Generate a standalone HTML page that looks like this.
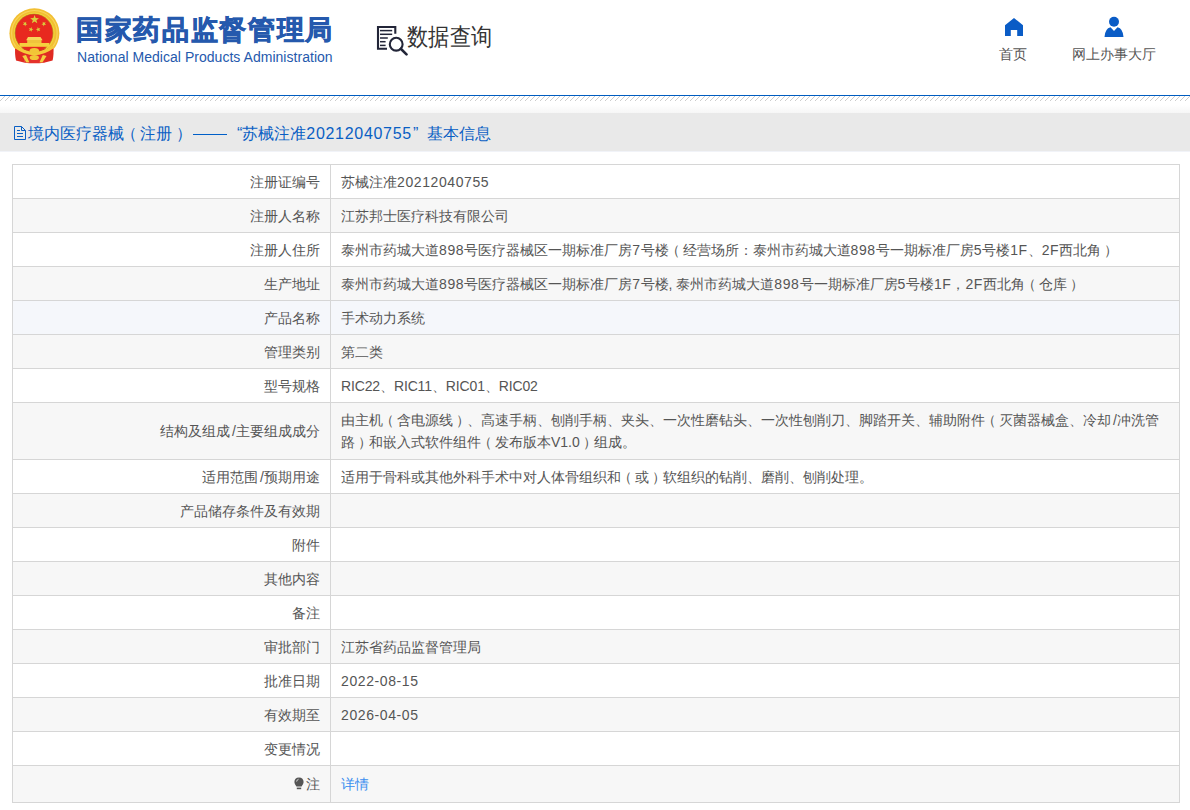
<!DOCTYPE html>
<html><head><meta charset="utf-8">
<style>
*{margin:0;padding:0;box-sizing:border-box}
html,body{width:1190px;height:810px;overflow:hidden;background:#fff;font-family:"Liberation Sans",sans-serif}
.hdr{position:absolute;left:0;top:0;width:1190px;height:95px;background:#fff}
.emb{position:absolute;left:0;top:0;width:70px;height:70px}
.t1{position:absolute;left:76px;top:13px;font-size:27px;font-weight:bold;color:#2559ad;-webkit-text-stroke:0.7px #2559ad;white-space:nowrap;line-height:34px;letter-spacing:1.65px}
.t2{position:absolute;left:77px;top:48px;font-size:14px;color:#2559ad;white-space:nowrap;line-height:18px;letter-spacing:0.03px}
.dq{position:absolute;left:376px;top:25px;width:33px;height:31px}
.dqt{position:absolute;left:407px;top:21px;font-size:22px;color:#333;white-space:nowrap;line-height:30px;transform:scale(0.97,1.1);transform-origin:0 0}
.nav{position:absolute;top:0;font-size:14px;color:#555;white-space:nowrap;line-height:18px}
.line{position:absolute;left:0;top:95px;width:1190px;height:1px;background:#005cc0}
.hatch{position:absolute;left:0;top:96px;width:1190px;height:5px;display:block}
.grad{position:absolute;left:0;top:105px;width:1190px;height:8px;background:linear-gradient(#fff,#f6f6f6)}
.band{position:absolute;left:0;top:113px;width:1190px;height:38px;background:#e9e9e9}
.band2{position:absolute;left:0;top:151px;width:1190px;height:1px;background:#f1f3f8}
.sh{position:relative}
.dash{display:inline-block;width:34px;height:1px;background:#005fc8;margin-left:5px;vertical-align:4px}
.q1{margin-left:10px}
.dg{letter-spacing:0.7px}
.q2{margin-left:1px}
.jb{margin-left:9px}
.ttl{padding-left:14px;position:absolute;left:14px;top:121px;font-size:16px;color:#0a5fc4;white-space:nowrap;line-height:26px}
table{position:absolute;left:12px;top:164px;width:1168px;border-collapse:collapse;font-size:14px;color:#555}
td{border:1px solid #d6d6d6;height:34px;line-height:22px;padding:0 0 0 10px;vertical-align:middle}
td.l{width:318px;text-align:right;padding:0 10px 0 0}
tr.g td{background:#f7f7f7}
tr.b td{background:#f5f7fb}
.n{letter-spacing:0.6px}
.r{letter-spacing:-0.15px}
.sl{margin-left:2px}
.lp{position:relative;left:-3px}
.rp{position:relative;left:3px}
a{color:#3a8ef0;text-decoration:none}
</style></head><body>
<div class="hdr">
<svg class="emb" width="70" height="70" viewBox="0 0 70 70">
  <path d="M16 44 H53 V56 Q34.4 62 16 56 Z" fill="#e02a22"/>
<path d="M15.2 44 L24.5 47 L24.8 62.7 L16 60.5 Q14.6 55 15.2 44 Z" fill="#e02a22"/>
  <path d="M53.4 44 L44.2 47 L43.9 62.7 L52.6 60.5 Q54 55 53.4 44 Z" fill="#e02a22"/>
  <defs><clipPath id="ec"><rect x="0" y="0" width="70" height="48.5"/></clipPath></defs>
  <g clip-path="url(#ec)"><circle cx="34.4" cy="33.3" r="25" fill="#f2bf32"/><circle cx="34.4" cy="33.3" r="22.8" fill="none" stroke="#f8d45a" stroke-width="1.2"/></g>
  <circle cx="34.2" cy="33.1" r="19.9" fill="none" stroke="#efdc3c" stroke-width="1"/>
  <circle cx="34" cy="33" r="18.9" fill="#e8291f" stroke="#a8741a" stroke-width="0.5"/>
  <g fill="#d9cf3e">
  <polygon points="34.60,15.00 35.72,18.06 38.97,18.18 36.41,20.19 37.30,23.32 34.60,21.50 31.90,23.32 32.79,20.19 30.23,18.18 33.48,18.06"/>
  <polygon points="26.25,21.73 25.96,23.47 27.45,24.42 25.70,24.68 25.26,26.39 24.48,24.81 22.72,24.92 23.97,23.68 23.33,22.04 24.89,22.86"/>
  <polygon points="42.65,21.73 44.01,22.86 45.57,22.04 44.93,23.68 46.18,24.92 44.42,24.81 43.64,26.39 43.20,24.68 41.45,24.42 42.94,23.47"/>
  <polygon points="31.55,26.99 31.72,28.74 33.40,29.27 31.78,29.97 31.80,31.73 30.63,30.41 28.96,30.97 29.85,29.45 28.80,28.04 30.52,28.42"/>
  <polygon points="37.65,26.99 38.68,28.42 40.40,28.04 39.35,29.45 40.24,30.97 38.57,30.41 37.40,31.73 37.42,29.97 35.80,29.27 37.48,28.74"/>
  </g>
  <path d="M26.2 40.2 L28 37 H40.5 L42.6 40.2 Z" fill="#f7d65a"/>
  <rect x="27.2" y="40" width="14.3" height="3.2" fill="#f0c43c"/>
  <rect x="19.5" y="43" width="29.8" height="3.8" fill="#f5cf3e"/>
    <path d="M24 54 Q34.4 58.5 44.5 54 L44.2 62.7 Q34.4 64 24.6 62.7 Z" fill="#e5322b"/>
  <path d="M15.5 46.8 Q34.4 60.5 53.2 46.8" fill="none" stroke="#f4c93a" stroke-width="3"/>
  <ellipse cx="34.3" cy="51" rx="4.8" ry="3" fill="#f2c537"/>
  <polygon points="22.3,56 26,55 29.3,62.3 26.4,62.6" fill="#f3d040"/>
  <polygon points="46.5,56 42.8,55 39.5,62.3 42.4,62.6" fill="#f3d040"/>
  <ellipse cx="34.3" cy="57.5" rx="4.6" ry="2.6" fill="#f2c537"/>
</svg>
<div class="t1">国家药品监督管理局</div>
<div class="t2">National Medical Products Administration</div>
<svg class="dq" viewBox="0 0 33 31">
  <path d="M11 23.8 H2 V2 H19.3 V8.8" fill="none" stroke="#222538" stroke-width="2.1"/>
  <g stroke="#222538" stroke-width="1.5">
  <line x1="4" y1="5.6" x2="16.2" y2="5.6"/>
  <line x1="4" y1="9.3" x2="16.2" y2="9.3"/>
  <line x1="4" y1="13" x2="11.8" y2="13"/>
  <line x1="4" y1="16.7" x2="9.6" y2="16.7"/>
  <line x1="4" y1="20.4" x2="9.6" y2="20.4"/>
  </g>
  <circle cx="20.2" cy="19.2" r="6.4" fill="none" stroke="#222538" stroke-width="2.1"/>
  <line x1="24.8" y1="23.8" x2="30.5" y2="29.4" stroke="#222538" stroke-width="2.6" stroke-linecap="round"/>
</svg>
<div class="dqt">数据查询</div>
<svg style="position:absolute;left:1004.5px;top:18px" width="18" height="18" viewBox="0 0 18 18">
  <path d="M9 0 L18 7.2 V18 H12.2 V12 H5.8 V18 H0 V7.2 Z" fill="#0a5cc6"/>
</svg>
<div class="nav" style="left:999px;top:45px">首页</div>
<svg style="position:absolute;left:1104px;top:16px" width="20" height="21" viewBox="0 0 20 21">
  <circle cx="10" cy="5.8" r="5" fill="#0a5cc6"/>
  <path d="M0.5 21 Q1 12.5 6.5 11.2 L10 15 L13.5 11.2 Q19 12.5 19.5 21 Z" fill="#0a5cc6"/>
</svg>
<div class="nav" style="left:1072px;top:45px">网上办事大厅</div>
</div>
<div class="line"></div>
<svg class="hatch" width="1190" height="5"><defs><pattern id="hp" width="5" height="5" patternUnits="userSpaceOnUse"><g fill="#cccccc"><rect x="4" y="0" width="1" height="1"/><rect x="3" y="1" width="1" height="1"/><rect x="2" y="2" width="1" height="1"/><rect x="1" y="3" width="1" height="1"/><rect x="0" y="4" width="1" height="1"/></g></pattern></defs><rect width="1190" height="5" fill="url(#hp)"/></svg>
<div class="grad"></div>
<div class="band"></div>
<div class="band2"></div>
<div class="ttl"><svg width="12" height="14" viewBox="0 0 12 14" style="position:absolute;left:0;top:5px"><path d="M0.5 0.5 H7.5 L11.5 4.5 V13.5 H0.5 Z M7.5 0.5 V4.5 H11.5" fill="none" stroke="#0a5fc4" stroke-width="1"/><path d="M3 4.5 H6 M3 7.5 H9 M3 10.5 H9" stroke="#0a5fc4" stroke-width="1"/></svg>境内医疗器械<span class="sh" style="left:-3.5px">（</span>注册<span class="sh" style="left:4px">）</span><span class="dash"></span><span class="q1">“</span>苏械注准<span class="dg">20212040755</span><span class="q2">”</span><span class="jb">基本信息</span></div>
<table>
<tr><td class="l">注册证编号</td><td>苏械注准<span class="n">20212040755</span></td></tr>
<tr class="g"><td class="l">注册人名称</td><td>江苏邦士医疗科技有限公司</td></tr>
<tr><td class="l">注册人住所</td><td>泰州市药城大道<span class="n">898</span>号医疗器械区一期标准厂房<span class="n">7</span>号楼<span class="lp">（</span>经营场所：泰州市药城大道<span class="n">898</span>号一期标准厂房<span class="n">5</span>号楼<span class="n">1F</span>、<span class="n">2F</span>西北角<span class="rp">）</span></td></tr>
<tr class="g"><td class="l">生产地址</td><td>泰州市药城大道<span class="n">898</span>号医疗器械区一期标准厂房<span class="n">7</span>号楼, 泰州市药城大道<span class="n">898</span>号一期标准厂房<span class="n">5</span>号楼<span class="n">1F</span>，<span class="n">2F</span>西北角<span class="lp">（</span>仓库<span class="rp">）</span></td></tr>
<tr class="b"><td class="l">产品名称</td><td>手术动力系统</td></tr>
<tr class="g"><td class="l">管理类别</td><td>第二类</td></tr>
<tr><td class="l">型号规格</td><td><span class="r">RIC22</span>、<span class="r">RIC11</span>、<span class="r">RIC01</span>、<span class="r">RIC02</span></td></tr>
<tr class="g"><td class="l" style="height:57px">结构及组成<span class="sl">/</span>主要组成成分</td><td>由主机<span class="lp">（</span>含电源线<span class="rp">）</span>、高速手柄、刨削手柄、夹头、一次性磨钻头、一次性刨削刀、脚踏开关、辅助附件<span class="lp">（</span>灭菌器械盒、冷却<span class="sl">/</span>冲洗管<br>路<span class="rp">）</span>和嵌入式软件组件<span class="lp">（</span>发布版本V1.0<span class="rp">）</span>组成。</td></tr>
<tr><td class="l">适用范围<span class="sl">/</span>预期用途</td><td>适用于骨科或其他外科手术中对人体骨组织和<span class="lp">（</span>或<span class="rp">）</span>软组织的钻削、磨削、刨削处理。</td></tr>
<tr class="g"><td class="l">产品储存条件及有效期</td><td></td></tr>
<tr><td class="l">附件</td><td></td></tr>
<tr class="g"><td class="l">其他内容</td><td></td></tr>
<tr><td class="l">备注</td><td></td></tr>
<tr class="g"><td class="l">审批部门</td><td>江苏省药品监督管理局</td></tr>
<tr><td class="l">批准日期</td><td><span class="n">2022-08-15</span></td></tr>
<tr class="g"><td class="l">有效期至</td><td><span class="n">2026-04-05</span></td></tr>
<tr><td class="l">变更情况</td><td></td></tr>
<tr class="g"><td class="l" style="height:37px"><svg width="10" height="13" viewBox="0 0 10 13" style="vertical-align:-1px;margin-right:2px"><path d="M5 0.5 C8 0.5 9.6 2.6 9.6 5 C9.6 7 8.2 8 7.6 9.4 L2.4 9.4 C1.8 8 0.4 7 0.4 5 C0.4 2.6 2 0.5 5 0.5 Z" fill="#555"/><rect x="2.8" y="10.6" width="4.4" height="1.6" fill="#555"/><path d="M2.6 4.6 Q2.8 2.6 4.6 2.2" stroke="#ddd" stroke-width="0.9" fill="none"/></svg>注</td><td><a>详情</a></td></tr>
</table>
</body></html>
